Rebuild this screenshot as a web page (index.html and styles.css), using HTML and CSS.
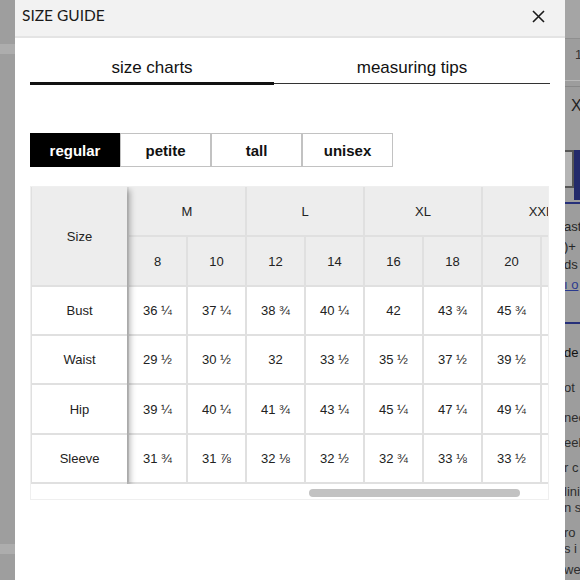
FILE: index.html
```html
<!DOCTYPE html>
<html>
<head>
<meta charset="utf-8">
<link rel="stylesheet" href="styles.css">
</head>
<body>
<div class="screen">
  <div class="left">
    <div class="band band-top"></div>
    <div class="band band-bottom"></div>
  </div>
  <div class="modal">
    <div class="header">
      <div class="title">SIZE GUIDE</div>
      <svg class="close" width="13" height="13" viewBox="0 0 13 13"><path d="M1 1L12 12M12 1L1 12" stroke="#1a1a1a" stroke-width="1.6" fill="none"/></svg>
    </div>
    <div class="body">
      <div class="tabs">
        <div class="tab active">size charts</div>
        <div class="tab other">measuring tips</div>
      </div>
      <div class="buttons">
        <div class="btn active">regular</div>
        <div class="btn">petite</div>
        <div class="btn">tall</div>
        <div class="btn">unisex</div>
      </div>
      <div class="scroll">
        <div class="table">
          <div class="sizecol">
            <div class="cell hd">Size</div>
            <div class="cell">Bust</div>
            <div class="cell">Waist</div>
            <div class="cell">Hip</div>
            <div class="cell">Sleeve</div>
          </div>
          <div class="data">
            <div class="cell hd span2">M</div>
            <div class="cell hd span2">L</div>
            <div class="cell hd span2">XL</div>
            <div class="cell hd span2">XXL</div>
            <div class="cell hd">8</div><div class="cell hd">10</div><div class="cell hd">12</div><div class="cell hd">14</div><div class="cell hd">16</div><div class="cell hd">18</div><div class="cell hd">20</div><div class="cell hd"></div>
            <div class="cell">36 ¼</div><div class="cell">37 ¼</div><div class="cell">38 ¾</div><div class="cell">40 ¼</div><div class="cell">42</div><div class="cell">43 ¾</div><div class="cell">45 ¾</div><div class="cell"></div>
            <div class="cell">29 ½</div><div class="cell">30 ½</div><div class="cell">32</div><div class="cell">33 ½</div><div class="cell">35 ½</div><div class="cell">37 ½</div><div class="cell">39 ½</div><div class="cell"></div>
            <div class="cell">39 ¼</div><div class="cell">40 ¼</div><div class="cell">41 ¾</div><div class="cell">43 ¼</div><div class="cell">45 ¼</div><div class="cell">47 ¼</div><div class="cell">49 ¼</div><div class="cell"></div>
            <div class="cell">31 ¾</div><div class="cell">31 ⅞</div><div class="cell">32 ⅛</div><div class="cell">32 ½</div><div class="cell">32 ¾</div><div class="cell">33 ⅛</div><div class="cell">33 ½</div><div class="cell"></div>
          </div>
        </div>
        <div class="bar"><div class="thumb"></div></div>
      </div>
    </div>
  </div>
  <div class="right">
    <div class="r-top"></div>
    <div class="r-a">1</div>
    <div class="r-lines"></div>
    <div class="r-x">X</div>
    <div class="r-box">
      <div class="r-field"></div>
      <div class="r-blue"></div>
    </div>
    <div class="r-rule r-rule1"></div>
    <div class="r-text">
      <div class="t1">ast</div>
      <div class="t2">)+</div>
      <div class="t2">ds</div>
      <div class="t3 link">ı o</div>
    </div>
    <div class="r-rule r-rule2"></div>
    <div class="r-text">
      <div class="d1">de</div>
      <div class="g l1">ot</div>
      <div class="g l2">nec</div>
      <div class="g l3">eel</div>
      <div class="g l3">r c</div>
      <div class="g l4">lini</div>
      <div class="g l5">n s</div>
      <div class="g l6">ro</div>
      <div class="g l5">s i</div>
      <div class="g l7">we</div>
    </div>
  </div>
</div>
</body>
</html>
```

FILE: styles.css
```css
html, body {
  margin: 0;
  padding: 0;
}
body {
  width: 580px;
  height: 580px;
  overflow: hidden;
  background: #9f9f9f;
  font-family: "Liberation Sans", Arial, sans-serif;
  color: #222;
}
.screen {
  display: flex;
  height: 580px;
}
.left {
  width: 15px;
  flex: none;
  background: #9e9e9e;
  display: flex;
  flex-direction: column;
}
.band {
  height: 10px;
  background: #adadad;
}
.band-top { margin-top: 44px; }
.band-bottom { margin-top: 490px; }

.modal {
  width: 550px;
  flex: none;
  background: #fff;
  display: flex;
  flex-direction: column;
}
.header {
  background: #f2f2f2;
  border-bottom: 2px solid #e4e4e4;
  display: flex;
  justify-content: space-between;
  align-items: flex-start;
  padding: 5px 20px 0 7px;
  height: 31px;
}
.title {
  font-family: Lato, "Liberation Sans", sans-serif;
  font-size: 15.5px;
  line-height: 20px;
  color: #1a1a1a;
}
.close {
  margin-top: 5px;
}
.body {
  padding: 0 15px;
}
.tabs {
  display: flex;
  align-items: flex-start;
}
.tab {
  font-size: 17px;
  line-height: 20px;
  text-align: center;
  padding-top: 20px;
  color: #111;
}
.tab.active {
  width: 244px;
  padding-bottom: 4px;
  border-bottom: 3px solid #111;
}
.tab.other {
  width: 276px;
  padding-bottom: 5px;
  border-bottom: 1px solid #333;
}
.buttons {
  display: flex;
  margin-top: 48px;
}
.btn {
  width: 91px;
  height: 34px;
  box-sizing: border-box;
  border: 1px solid #c2c2c2;
  font-weight: bold;
  font-size: 15px;
  display: flex;
  align-items: center;
  justify-content: center;
  color: #111;
}
.btn.active {
  width: 90px;
  background: #000;
  color: #fff;
  border-color: #000;
}
.scroll {
  margin-top: 19px;
  width: 517px;
  border: 1px solid #efefef;
}
.table {
  display: flex;
  height: 297px;
  overflow: hidden;
}
.cell {
  display: flex;
  align-items: center;
  justify-content: center;
  background: #fff;
  font-size: 13px;
  color: #222;
}
.cell.hd {
  background: #ededed;
}
.sizecol {
  flex: none;
  width: 96px;
  box-sizing: border-box;
  display: grid;
  grid-template-rows: 98px 47px 47px 48px 47px;
  gap: 2px;
  padding: 0 0 2px 1px;
  background: #e0e0e0;
  position: relative;
  z-index: 1;
  box-shadow: 3px 3px 6px rgba(0, 0, 0, 0.3);
}
.data {
  flex: none;
  display: grid;
  grid-template-columns: repeat(8, 57px);
  grid-template-rows: 48px 48px 47px 47px 48px 47px;
  gap: 2px;
  padding: 0 0 2px 2px;
  background: #e0e0e0;
}
.span2 {
  grid-column: span 2;
}
.bar {
  height: 15px;
  display: flex;
  align-items: flex-start;
}
.thumb {
  margin-top: 5px;
  margin-left: 278px;
  width: 211px;
  height: 8px;
  border-radius: 4px;
  background: #c2c2c2;
}

.right {
  width: 15px;
  flex: none;
  overflow: hidden;
  background: #9d9d9d;
  font-size: 13px;
  color: #262626;
  white-space: nowrap;
}
.r-top {
  height: 38px;
  background: #a5a5a5;
  border-bottom: 1px solid #8f8f8f;
}
.r-a {
  height: 41px;
  line-height: 32px;
  padding-left: 10px;
  font-size: 13px;
  color: #333;
}
.r-lines {
  height: 5px;
  border-top: 1px solid #b9b9b9;
  border-bottom: 1px solid #888;
}
.r-x {
  height: 38px;
  line-height: 38px;
  padding-left: 6px;
  font-size: 16px;
  color: #222;
}
.r-box {
  margin-top: 25px;
  height: 50px;
  display: flex;
  align-items: flex-start;
}
.r-field {
  width: 9px;
  height: 38px;
  box-sizing: border-box;
  border: 2px solid #555;
  border-left: none;
  background: #b5b5b5;
}
.r-blue {
  width: 6px;
  height: 50px;
  background: #232a6b;
}
.r-rule {
  height: 2px;
  background: #26307a;
}
.r-rule1 { margin-top: 2px; }
.r-rule2 { margin-top: 26px; }
.r-text {
  margin-left: -1px;
}
.t1 { margin-top: 12px; height: 22px; line-height: 22px; }
.t2 { height: 18px; line-height: 18px; }
.t3 { height: 22px; line-height: 22px; }
.link { color: #2a3a8f; text-decoration: underline; }
.d1 { margin-top: 19px; height: 20px; line-height: 20px; color: #111; }
.g { height: 20px; line-height: 20px; color: #2e2e2e; }
.l1 { margin-top: 15px; }
.l2 { margin-top: 10px; }
.l3 { margin-top: 5px; }
.l4 { margin-top: 6px; height: 16px; line-height: 16px; }
.l5 { height: 16px; line-height: 16px; }
.l6 { margin-top: 9px; height: 16px; line-height: 16px; }
.l7 { margin-top: 5px; height: 16px; line-height: 16px; }
```
